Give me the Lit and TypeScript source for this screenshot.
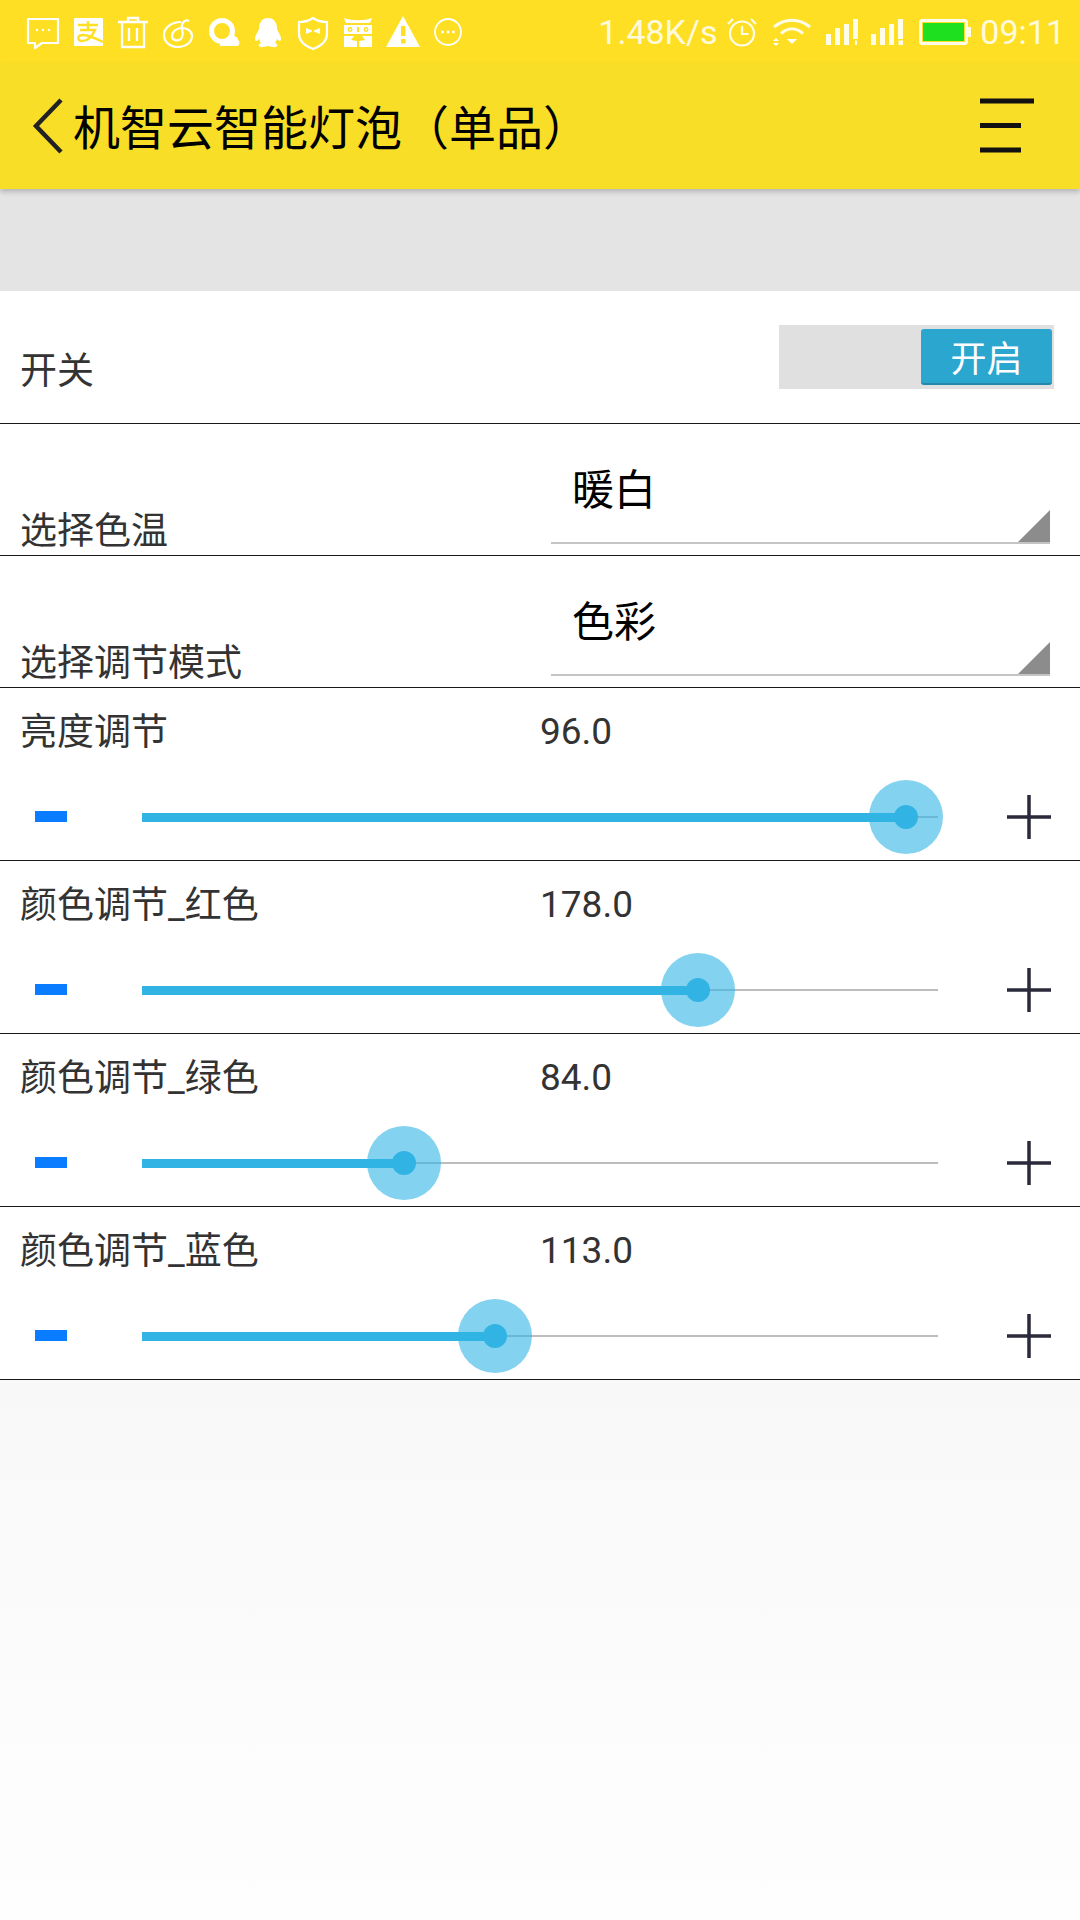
import { LitElement, html, css, svg } from "lit";
import { customElement } from "lit/decorators.js";

const W = "#fff";
const Y = "#FFDF24";

const leftIcons = [
  svg`<path d="M3 4h30v24H17l-7 5v-5H3z" fill="none" stroke="${W}" stroke-width="2.200" stroke-linejoin="round"/><circle cx="12" cy="15" r="1.200" fill="${W}"/><circle cx="18" cy="15" r="1.200" fill="${W}"/><circle cx="24" cy="15" r="1.200" fill="${W}"/>`,
  svg`<rect x="4" y="3" width="29" height="28" rx="1" fill="${W}"/><path d="M8 10h20M18 6v9M10 15h15c-3 7-8 11-13 11-5 0-5-6 1-6 5 0 12 3 20 7" fill="none" stroke="${Y}" stroke-width="2.400"/>`,
  svg`<path d="M3 7h30M13 7V3h10v4M7 7v25h22V7M14 13v13M22 13v13" fill="none" stroke="${W}" stroke-width="2.300"/>`,
  svg`<path d="M21 7C11 7 4 13 4 20c0 7 6 12 14 12s14-5 14-11c0-5-5-8-10-8-6 0-10 4-10 8s4 5 7 4c4-1 4-7 3-12-1-5 3-9 7-7" fill="none" stroke="${W}" stroke-width="2.200"/>`,
  svg`<circle cx="17" cy="16" r="10.500" fill="none" stroke="${W}" stroke-width="5"/><path d="M15 31c0-6 5-8 9-7 2-5 9-3 9 1 2 1 2 6-1 6z" fill="${W}"/>`,
  svg`<path d="M18 3c6 0 9 5 9 10 0 2 1 3 2 5 2 4 3 7 1 8-1 0-2-1-3-2-1 2-1 3-2 4 2 1 3 2 2 3-1 2-5 1-9 0-4 1-8 2-9 0-1-1 0-2 2-3-1-1-1-2-2-4-1 1-2 2-3 2-2-1-1-4 1-8 1-2 2-3 2-5 0-5 3-10 9-10z" fill="${W}"/>`,
  svg`<path d="M18 3c4 3 9 4 14 4v12c0 7-6 12-14 15C10 31 4 26 4 19V7c5 0 10-1 14-4z" fill="none" stroke="${W}" stroke-width="2.200"/><path d="M11 13l6 2.500v1L11 19zM25 13l-6 2.500v1l6 2.500z" fill="${W}"/>`,
  svg`<path d="M4 3c8 3 20 3 28 0l-2 5H6z" fill="${W}"/><path d="M4 10h28v9H4z" fill="${W}"/><path d="M4 21h10l-3 4 6 1v6H4zM32 21H22l3 4-6 1v6h13z" fill="${W}"/><circle cx="10" cy="14.500" r="2.400" fill="${Y}"/><circle cx="26" cy="14.500" r="2.400" fill="${Y}"/><circle cx="10" cy="14.500" r="1" fill="${W}"/><circle cx="26" cy="14.500" r="1" fill="${W}"/><rect x="17" y="12" width="2" height="5" fill="${Y}"/>`,
  svg`<path d="M18 1l17 31H1z" fill="${W}"/><rect x="16" y="11" width="4.500" height="10" fill="${Y}"/><rect x="16" y="24" width="4.500" height="4.500" fill="${Y}"/>`,
  svg`<circle cx="18" cy="17" r="13" fill="none" stroke="${W}" stroke-width="1.800"/><circle cx="12.500" cy="17" r="1.400" fill="${W}"/><circle cx="18" cy="17" r="1.400" fill="${W}"/><circle cx="23.500" cy="17" r="1.400" fill="${W}"/>`,
];

interface Slider { label: string; value: number; max: number; }

const sliders: Slider[] = [
  { label: "亮度调节", value: 96, max: 100 },
  { label: "颜色调节_红色", value: 178, max: 255 },
  { label: "颜色调节_绿色", value: 84, max: 255 },
  { label: "颜色调节_蓝色", value: 113, max: 255 },
];

const signal = (tiny: unknown) => svg`
  <rect x="0" y="15" width="5" height="11"/><rect x="9" y="9" width="5" height="17"/><rect x="18" y="5" width="5" height="21"/><rect x="27" y="0" width="5" height="20"/>
  ${tiny}`;

@customElement("app-root")
export class AppRoot extends LitElement {
  static styles = css`
    :host {
      display: flex;
      flex-direction: column;
      width: 1080px;
      height: 1920px;
      font-family: "Noto Sans CJK SC", "Liberation Sans", sans-serif;
      color: #333;
      overflow: hidden;
    }
    .status {
      height: 63px;
      background: #ffdf24;
      display: flex;
      align-items: center;
      padding-left: 20px;
      color: rgba(255, 255, 255, 0.85);
    }
    .sicon { width: 45px; height: 36px; display: flex; justify-content: center; margin-top: 2px; }
    .sicon svg { width: 36px; height: 36px; display: block; }
    .status-right {
      margin-left: auto;
      display: flex;
      align-items: center;
      font-family: Roboto, sans-serif;
      font-size: 34px;
      padding-right: 15px;
    }
    .speed { width: 129px; }
    .time { margin-left: 9px; }
    .status-right svg { display: block; }
    .toolbar {
      height: 126px;
      background: #f8de26;
      display: flex;
      align-items: center;
      padding-left: 32px;
      padding-right: 46px;
      color: #000;
      font-size: 47px;
      position: relative;
      box-shadow: 0 3px 5px rgba(0, 0, 0, 0.2);
    }
    .title { margin-left: 9px; flex: 1; line-height: 1; padding-bottom: 3px; }
    .band { height: 102px; background: #e4e4e4; }
    .rows { background: #fff; }
    .row { border-bottom: 1px solid #1a1a1a; box-sizing: border-box; display: flex; }
    .label {
      font-family: Roboto, "Noto Sans CJK SC", sans-serif;
      font-size: 37px;
      line-height: 44px;
      padding-left: 20px;
      width: 519px;
      box-sizing: border-box;
    }
    .row-switch { height: 133px; align-items: center; justify-content: space-between; padding-top: 16px; padding-right: 26px; }
    .row-switch .label { width: auto; margin-top: 14px; }
    .toggle {
      width: 275px;
      height: 64px;
      background: #e0e0e0;
      margin-top: -17px;
      display: flex;
      justify-content: flex-end;
      align-items: center;
      padding-right: 2px;
      box-sizing: border-box;
    }
    .toggle-on {
      width: 131px;
      height: 56px;
      background: #2ba6cf;
      border-bottom: 2px solid #2388aa;
      border-radius: 3px;
      box-sizing: border-box;
      color: #fff;
      font-size: 36px;
      display: flex;
      align-items: center;
      justify-content: center;
    }
    .row-select { height: 132px; align-items: flex-end; }
    .row-select .label { width: 551px; padding-bottom: 1px; }
    .select {
      width: 499px;
      height: 120px;
      border-bottom: 2px solid #c4c4c4;
      margin-bottom: 11px;
      position: relative;
      box-sizing: border-box;
      font-size: 42px;
      color: #000;
      padding-left: 21px;
      line-height: 56px;
      padding-top: 35px;
    }
    .select::after {
      content: "";
      position: absolute;
      right: 0;
      bottom: 0;
      border-style: solid;
      border-width: 0 0 32px 32px;
      border-color: transparent transparent #8c8c8c transparent;
    }
    .row-slider { height: 173px; flex-direction: column; }
    .slider-top { display: flex; align-items: center; height: 88px; }
    .slider-top .label { width: 540px; padding-top: 1px; }
    .value { font-family: Roboto, sans-serif; font-size: 37px; line-height: 44px; }
    .slider-bottom { display: flex; align-items: center; height: 84px; margin-top: -1px; }
    .minus { width: 32px; height: 11px; background: #0a7cff; margin-left: 35px; margin-top: -2px; }
    .track { width: 796px; height: 2px; background: #bdbdbd; margin-left: 75px; position: relative; }
    .fill { position: absolute; left: 0; top: -3.500px; height: 9px; background: #31b4e4; }
    .halo { position: absolute; top: 1px; width: 74px; height: 74px; border-radius: 50%; background: rgba(49, 180, 228, 0.6); transform: translate(-50%, -50%); }
    .knob { position: absolute; top: 1px; width: 24px; height: 24px; border-radius: 50%; background: #31b4e4; transform: translate(-50%, -50%); }
    .plus { margin-left: 69px; display: block; }
    .filler { flex: 1; background: linear-gradient(#f8f8f8, #fefefe); }
  `;

  private slider(s: Slider) {
    const pct = (s.value / s.max) * 100;
    return html`<div class="row row-slider">
      <div class="slider-top">
        <div class="label">${s.label}</div>
        <div class="value">${s.value.toFixed(1)}</div>
      </div>
      <div class="slider-bottom">
        <div class="minus"></div>
        <div class="track">
          <div class="fill" style="width:${pct}%"></div>
          <div class="halo" style="left:${pct}%"></div>
          <div class="knob" style="left:${pct}%"></div>
        </div>
        <svg class="plus" width="44" height="44" viewBox="0 0 44 44">
          <path d="M22 0v44M0 22h44" stroke="#2a2a3a" stroke-width="3.500" stroke-linecap="round" fill="none"/>
        </svg>
      </div>
    </div>`;
  }

  render() {
    return html`
      <div class="status">
        ${leftIcons.map((i) => html`<div class="sicon"><svg viewBox="0 0 36 36">${i}</svg></div>`)}
        <div class="status-right">
          <span class="speed">1.48K/s</span>
          <svg width="30" height="30" viewBox="0 0 30 30" fill="none" stroke="#fff" stroke-opacity="0.9" stroke-width="2.200">
            <circle cx="15" cy="16.500" r="12"/><path d="M15 9v8h6.500M1 7l5-5M29 7l-5-5"/>
          </svg>
          <svg style="margin-left:16px" width="38" height="28" viewBox="0 0 38 28" fill="none" stroke="#fff" stroke-opacity="0.9" stroke-width="3">
            <path d="M1 9c11-9 25-9 36 0M8 15.500c7-6 15-6 22 0"/>
            <path d="M14 21h10l-5 5z" fill="#fff" stroke="none"/>
            <path d="M0 23h6l-3-3zM0 25h6l-3 3z" fill="#fff" stroke="none"/>
          </svg>
          <svg style="margin-left:15px" width="32" height="26" viewBox="0 0 32 26" fill="#fff" fill-opacity="0.9">
            ${signal(svg`<rect x="29" y="21.500" width="2" height="4.500"/>`)}
          </svg>
          <svg style="margin-left:13px" width="32" height="26" viewBox="0 0 32 26" fill="#fff" fill-opacity="0.9">
            ${signal(svg`<rect x="27.500" y="21.500" width="4.500" height="4.500"/>`)}
          </svg>
          <svg style="margin-left:16px" width="52" height="26" viewBox="0 0 52 26">
            <rect x="1.500" y="1.500" width="46" height="23" rx="2" fill="none" stroke="#fff" stroke-opacity="0.9" stroke-width="3"/>
            <rect x="4" y="4" width="41" height="18" fill="#1ee01e"/>
            <rect x="49" y="8" width="3" height="10" fill="#fff" fill-opacity="0.9"/>
          </svg>
          <span class="time">09:11</span>
        </div>
      </div>
      <div class="toolbar">
        <svg width="32" height="56" viewBox="0 0 32 56" fill="none" stroke="#222" stroke-width="4.500"><path d="M29 2L4 28l25 26"/></svg>
        <div class="title">机智云智能灯泡（单品）</div>
        <svg width="54" height="56" viewBox="0 0 54 56" stroke="#111" stroke-width="5"><path d="M0 3h54M0 27.500h41M0 52h41"/></svg>
      </div>
      <div class="band"></div>
      <div class="rows">
        <div class="row row-switch">
          <div class="label">开关</div>
          <div class="toggle"><div class="toggle-on">开启</div></div>
        </div>
        <div class="row row-select">
          <div class="label">选择色温</div>
          <div class="select">暖白</div>
        </div>
        <div class="row row-select">
          <div class="label">选择调节模式</div>
          <div class="select">色彩</div>
        </div>
        ${sliders.map((s) => this.slider(s))}
      </div>
      <div class="filler"></div>
    `;
  }
}
